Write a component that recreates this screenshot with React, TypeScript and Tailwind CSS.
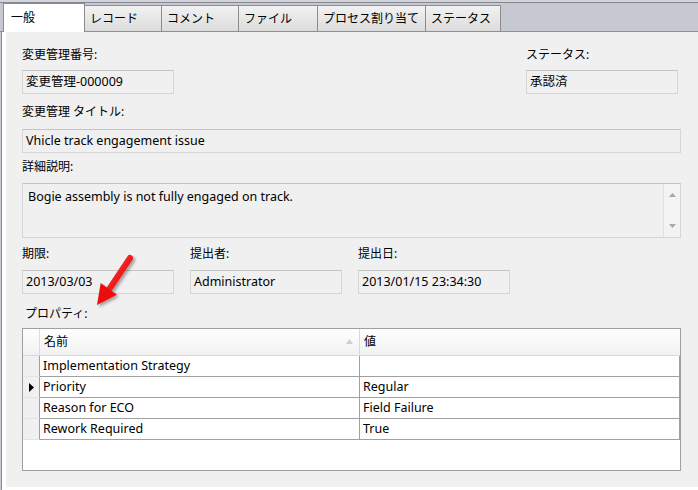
import React from "react";

const FONT = { fontFamily: '"Noto Sans", "Noto Sans CJK JP", sans-serif' };

function Label({ children, className = "" }: { children: React.ReactNode; className?: string }) {
  return <div className={"h-[16px] leading-[16px] text-[12px] text-black whitespace-nowrap " + className}>{children}</div>;
}

function Box({ children, className = "" }: { children?: React.ReactNode; className?: string }) {
  return (
    <div
      className={
        "h-[24px] border border-[#d6d6d6] border-t-[#c4c4c4] bg-[#f0f0f0] flex items-center pl-[3px] text-[12.5px] text-black whitespace-nowrap " +
        className
      }
    >
      {children}
    </div>
  );
}

function Tab({ label, w }: { label: string; w: string }) {
  return (
    <div
      className={
        "h-[26px] border border-b-0 border-[#8c8c8c] -ml-[1px] first:ml-0 bg-gradient-to-b from-[#f2f2f2] to-[#dcdcdc] flex items-center pl-[5px] text-[12px] text-black whitespace-nowrap " +
        w
      }
    >
      {label}
    </div>
  );
}

const rows = [
  { name: "Implementation Strategy", value: "" },
  { name: "Priority", value: "Regular", current: true },
  { name: "Reason for ECO", value: "Field Failure" },
  { name: "Rework Required", value: "True" },
];

export default function App() {
  return (
    <div className="relative w-[698px] h-[490px] overflow-hidden bg-white" style={FONT}>
      {/* tab strip */}
      <div className="h-[2px] bg-[#d2d4d9]" />
      <div className="h-[30px] bg-[#c6c9d1] border-t border-[#858891] border-b border-b-[#8e9096] flex items-end pl-[3px]">
        <div className="h-[29px] -mb-[1px] w-[82px] bg-white border border-b-0 border-[#8c8c8c] flex items-center pl-[7px] pb-[1px] text-[12px] text-black relative z-10">
          一般
        </div>
        <div className="flex items-end -ml-[1px]">
          <Tab label="レコード" w="w-[78px]" />
          <Tab label="コメント" w="w-[78px]" />
          <Tab label="ファイル" w="w-[80px]" />
          <Tab label="プロセス割り当て" w="w-[109px]" />
          <Tab label="ステータス" w="w-[76px]" />
        </div>
      </div>

      {/* panel */}
      <div className="flex h-[458px]">
        <div className="w-[2px] bg-[#c6c9d1]" />
        <div className="w-[1px] bg-[#8e9096]" />
        <div className="flex-1 bg-white pl-[4px] pb-[3px]">
          <div className="h-full bg-[#f0f0f0] pl-[16px] pr-[17px] pt-[15px]">
            {/* row 1 */}
            <div className="flex">
              <div className="w-[152px]">
                <Label>変更管理番号:</Label>
                <Box className="mt-[7px] w-[152px]">変更管理-000009</Box>
              </div>
              <div className="ml-[352px] w-[152px]">
                <Label>ステータス:</Label>
                <Box className="mt-[7px] w-[152px]">承認済</Box>
              </div>
            </div>

            {/* title */}
            <Label className="mt-[10px]">変更管理 タイトル:</Label>
            <Box className="mt-[9px] w-[659px] pl-[2px]">Vhicle track engagement issue</Box>

            {/* detail */}
            <Label className="mt-[6px]">詳細説明:</Label>
            <div className="mt-[8px] w-[659px] h-[55px] border border-[#d6d6d6] border-t-[#c4c4c4] bg-[#f0f0f0] flex">
              <div className="flex-1 pl-[5px] pt-[4px] text-[12.5px] leading-[18px] text-black">
                Bogie assembly is not fully engaged on track.
              </div>
              <div className="w-[17px] border-l border-[#e2e2e2] bg-[#f3f3f3] flex flex-col items-center justify-between py-[9px]">
                <svg width="7" height="4" viewBox="0 0 7 4">
                  <path d="M3.5 0 L7 4 L0 4 Z" fill="#a8a8a8" />
                </svg>
                <svg width="7" height="4" viewBox="0 0 7 4">
                  <path d="M0 0 L7 0 L3.5 4 Z" fill="#a8a8a8" />
                </svg>
              </div>
            </div>

            {/* dates */}
            <div className="flex gap-[16px] mt-[8px]">
              <div className="w-[152px]">
                <Label>期限:</Label>
                <Box className="mt-[8px] w-[152px]">2013/03/03</Box>
              </div>
              <div className="w-[152px]">
                <Label>提出者:</Label>
                <Box className="mt-[8px] w-[152px]">Administrator</Box>
              </div>
              <div className="w-[152px]">
                <Label>提出日:</Label>
                <Box className="mt-[8px] w-[152px]">2013/01/15 23:34:30</Box>
              </div>
            </div>

            {/* properties */}
            <Label className="mt-[12px] pl-[3px]">プロパティ:</Label>
            <div className="mt-[6px] w-[659px] h-[143px] border border-[#a0a0a0] bg-white text-[12.5px] text-black">
              {/* header */}
              <div className="flex h-[27px] bg-gradient-to-b from-white to-[#f1f1f1] border-b border-[#d8d8d8] text-[12px]">
                <div className="w-[17px] border-r border-[#dcdcdc]" />
                <div className="w-[320px] border-r border-[#d8d8d8] flex items-center pl-[4px] relative">
                  名前
                  <svg className="absolute right-[6px] top-[10px]" width="7" height="5" viewBox="0 0 7 5">
                    <path d="M3.5 0 L7 5 L0 5 Z" fill="#d0d0d0" />
                  </svg>
                </div>
                <div className="flex-1 flex items-center pl-[4px]">値</div>
              </div>
              {rows.map((r) => (
                <div key={r.name} className="flex h-[21px]">
                  <div className="w-[17px] bg-[#f0f0f0] border-b border-[#e4e4e4] border-r border-r-[#a0a0a0] flex items-center justify-center">
                    {r.current && (
                      <svg width="5" height="9" viewBox="0 0 5 9">
                        <path d="M0 0 L5 4.5 L0 9 Z" fill="#000" />
                      </svg>
                    )}
                  </div>
                  <div className="w-[320px] border-b border-r border-[#a0a0a0] flex items-center pl-[3px] whitespace-nowrap">
                    {r.name}
                  </div>
                  <div className="w-[320px] border-b border-r border-[#a0a0a0] flex items-center pl-[3px] whitespace-nowrap">
                    {r.value}
                  </div>
                </div>
              ))}
            </div>
          </div>
        </div>
      </div>

      {/* red arrow annotation */}
      <svg className="absolute left-0 top-0 pointer-events-none" width="698" height="490" viewBox="0 0 698 490">
        <defs>
          <filter id="sh" x="-50%" y="-50%" width="200%" height="200%">
            <feDropShadow dx="2" dy="2" stdDeviation="1.6" floodColor="#000" floodOpacity="0.35" />
          </filter>
          <linearGradient id="rg" x1="0" y1="0" x2="1" y2="1">
            <stop offset="0" stopColor="#ff3b3b" />
            <stop offset="1" stopColor="#e00000" />
          </linearGradient>
        </defs>
        <g filter="url(#sh)">
          <line x1="130" y1="258" x2="110" y2="288" stroke="url(#rg)" strokeWidth="6" strokeLinecap="round" />
          <path d="M97 305 L100.7 282.9 L116.9 294.7 Z" fill="#ee1111" />
        </g>
      </svg>
    </div>
  );
}
